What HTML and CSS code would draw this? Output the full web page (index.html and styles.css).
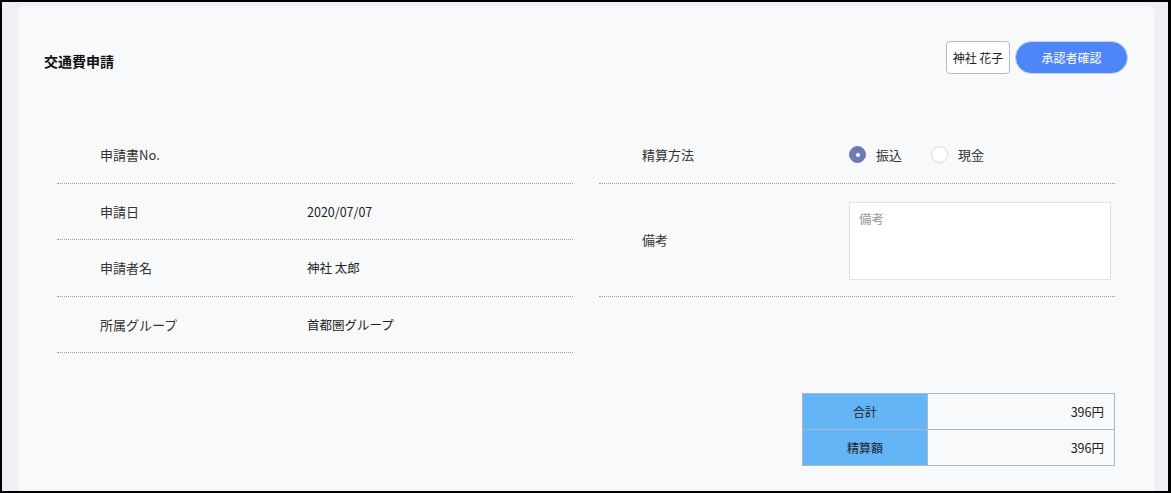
FILE: index.html
```html
<!DOCTYPE html>
<html lang="ja">
<head>
<meta charset="utf-8">
<title>交通費申請</title>
<link rel="stylesheet" href="styles.css">
</head>
<body>
<div class="frame">
  <div class="card">
    <header class="head">
      <h1 class="title">交通費申請</h1>
      <div class="actions">
        <button class="btn-outline">神社 花子</button>
        <button class="btn-primary">承認者確認</button>
      </div>
    </header>

    <section class="form">
      <div class="col">
        <div class="row"><span class="label">申請書No.</span><span class="value"></span></div>
        <div class="row"><span class="label">申請日</span><span class="value">2020/07/07</span></div>
        <div class="row"><span class="label">申請者名</span><span class="value">神社 太郎</span></div>
        <div class="row"><span class="label">所属グループ</span><span class="value">首都圏グループ</span></div>
      </div>
      <div class="col">
        <div class="row">
          <span class="label">精算方法</span>
          <span class="value radios">
            <label class="radio"><span class="dot on"></span>振込</label>
            <label class="radio"><span class="dot"></span>現金</label>
          </span>
        </div>
        <div class="row tall">
          <span class="label">備考</span>
          <span class="value"><span class="textarea">備考</span></span>
        </div>
      </div>
    </section>

    <section class="summary">
      <div class="sum-table">
        <div class="sum-key">合計</div><div class="sum-val">396円</div>
        <div class="sum-key">精算額</div><div class="sum-val">396円</div>
      </div>
    </section>
  </div>
</div>
</body>
</html>
```

FILE: styles.css
```css
* { box-sizing: border-box; }
html, body { margin: 0; padding: 0; }
body {
  width: 1171px;
  height: 493px;
  overflow: hidden;
  font-family: "Noto Sans CJK JP", "Noto Sans", sans-serif;
  font-size: 13px;
  color: #333;
}
.frame {
  width: 1171px;
  height: 493px;
  border-style: solid;
  border-color: #000;
  border-width: 2px 3px 2px 2px;
  background: #eff0f5;
  padding: 4px 14px 0 16px;
  overflow: hidden;
}
.card {
  background: #f8f9fb;
  border-radius: 6px 6px 0 0;
  height: 600px;
}
.head {
  display: flex;
  justify-content: space-between;
  align-items: flex-start;
  padding: 35px 26px 0 26px;
}
.title {
  margin: 10px 0 0 0;
  font-size: 14px;
  font-weight: 700;
  color: #111;
  line-height: 20px;
}
.actions { display: flex; gap: 5px; }
.btn-outline, .btn-primary {
  font-family: inherit;
  font-size: 12px;
  height: 33px;
  cursor: pointer;
}
.btn-outline {
  width: 64px;
  background: #fff;
  border: 1px solid #b4bccb;
  border-radius: 4px;
  color: #222;
  padding: 0;
}
.btn-primary {
  width: 113px;
  background: #4f86f7;
  border: 1px solid #c4d2ef;
  border-radius: 17px;
  color: #fff;
  padding: 0;
}
.form {
  display: grid;
  grid-template-columns: 516px 516px;
  column-gap: 26px;
  padding: 53px 39px 0 39px;
  align-items: start;
}
.row {
  display: flex;
  align-items: center;
  height: 56.5px;
  border-bottom: 1px dotted #9a9a9a;
  padding-left: 43px;
}
.row.tall { height: 113px; align-items: center; }
.label { width: 207px; flex: none; color: #333; }
.value { color: #222; font-size: 12.5px; }
.radios { display: flex; gap: 29px; align-items: center; }
.radio { display: flex; align-items: center; gap: 10px; font-size: 13px; color: #333; }
.dot {
  width: 17px; height: 17px;
  border-radius: 50%;
  border: 1px solid #d8d8dc;
  background: #fff;
  position: relative;
}
.dot.on { background: #6e7bb2; border-color: #6e7bb2; }
.dot.on::after {
  content: "";
  position: absolute;
  left: 5.5px; top: 5.5px;
  width: 4px; height: 4px;
  border-radius: 50%;
  background: #fff;
}
.row.tall .value { align-self: flex-start; margin-top: 18px; }
.textarea {
  display: block;
  width: 262px;
  height: 78px;
  background: #fff;
  border: 1px solid #e2e2e2;
  padding: 6px 9px;
  color: #999;
  font-size: 12.5px;
}
.summary {
  display: flex;
  justify-content: flex-end;
  padding: 40px 39px 0 0;
}
.sum-table {
  display: grid;
  grid-template-columns: 124px 1fr;
  border: 1px solid #a9b6cc;
  width: 313px;
}
.sum-key {
  background: #64b5f6;
  height: 35.5px;
  display: flex; align-items: center; justify-content: center;
  font-size: 12px; color: #222;
}
.sum-val {
  background: #f8f9fb;
  height: 35.5px;
  display: flex; align-items: center; justify-content: flex-end;
  padding-right: 10px;
  font-size: 12.5px; color: #222;
  border-left: 1px solid #a9b6cc;
}
.sum-key:nth-child(1) { border-bottom: 1px solid #a9b6cc; }
.sum-val:nth-child(2) { border-bottom: 1px solid #a9b6cc; }
```
